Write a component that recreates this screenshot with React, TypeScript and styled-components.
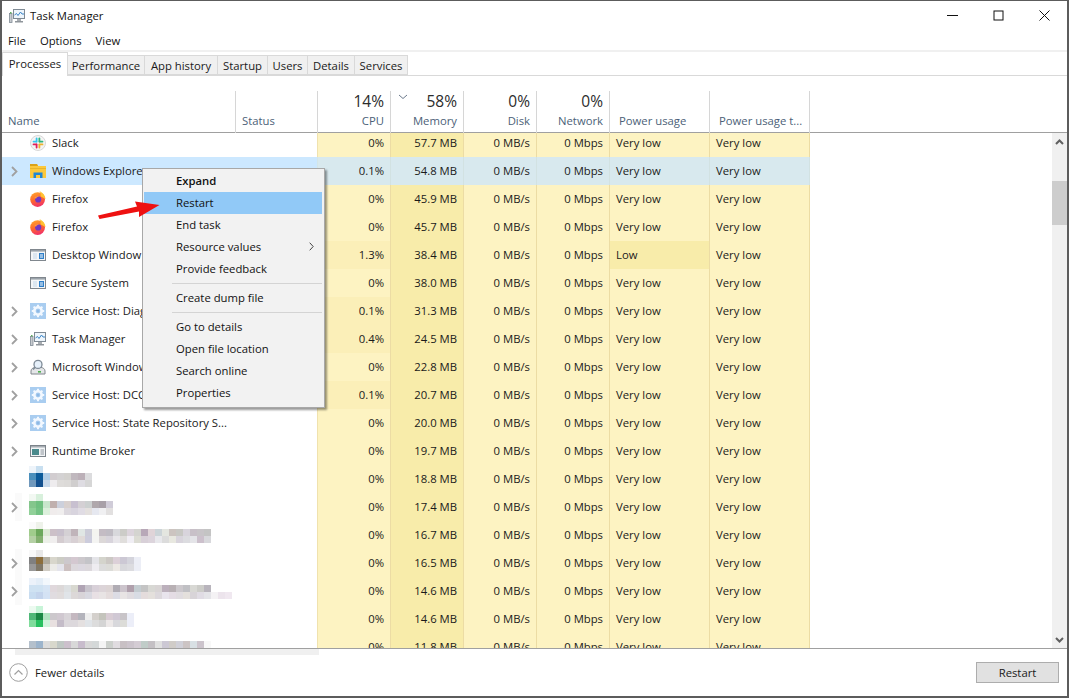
import React from "react";
import styled, { createGlobalStyle } from "styled-components";

const GlobalStyle = createGlobalStyle`
  html, body { margin: 0; padding: 0; background: #fff; }
  body { font-family: "Open Sans", "Liberation Sans", sans-serif; font-size: 11.3px; color: #1a1a1a; }
`;

const GRID = "234px 82px 73px 73px 73px 73px 100px 100px 1fr";

const Window = styled.div`
  position: relative;
  box-sizing: border-box;
  width: 1069px;
  height: 698px;
  display: flex;
  flex-direction: column;
  background: #fff;
  border-style: solid;
  border-color: #5c5c5c;
  border-width: 1px 2px 2px 2px;
  overflow: hidden;
`;
const TitleBar = styled.div`
  height: 29px;
  flex: none;
  display: flex;
  align-items: center;
  padding: 0 17px 0 7px;
  gap: 5px;
`;
const TitleText = styled.span`
  color: #111;
  flex: 1;
`;
const WinControls = styled.div`
  display: flex;
  align-items: center;
  gap: 35px;
`;
const MenuBar = styled.div`
  height: 20px;
  flex: none;
  display: flex;
  align-items: center;
  padding-left: 6px;
  gap: 14px;
  border-bottom: 2px solid #f0f0f0;
  box-sizing: content-box;
`;
const MenuLabel = styled.span`
  color: #111;
`;
const TabStrip = styled.div`
  height: 24px;
  flex: none;
  display: flex;
  align-items: flex-end;
  border-bottom: 1px solid #d9d9d9;
  box-sizing: border-box;
`;
const Tab = styled.div<{ $active?: boolean; $w: number }>`
  box-sizing: border-box;
  width: ${(p) => p.$w}px;
  height: ${(p) => (p.$active ? 24 : 20)}px;
  margin-bottom: ${(p) => (p.$active ? -1 : 0)}px;
  padding-bottom: ${(p) => (p.$active ? 3 : 0)}px;
  display: flex;
  align-items: center;
  justify-content: center;
  white-space: nowrap;
  background: ${(p) => (p.$active ? "#fff" : "#f0f0f0")};
  border: 1px solid #d9d9d9;
  border-bottom: ${(p) => (p.$active ? "none" : "1px solid #d9d9d9")};
  border-left: ${(p) => (p.$active ? "1px solid #d9d9d9" : "none")};
`;
const ColumnHeader = styled.div`
  height: 57px;
  flex: none;
  box-sizing: border-box;
  padding-top: 15px;
  display: grid;
  grid-template-columns: ${GRID};
  border-bottom: 1px solid #a0a0a0;
`;
const HeadCell = styled.div<{ $left?: boolean; $indent?: number }>`
  position: relative;
  box-sizing: border-box;
  display: flex;
  flex-direction: column;
  justify-content: flex-end;
  align-items: ${(p) => (p.$left ? "flex-start" : "flex-end")};
  padding: ${(p) => (p.$left ? `0 0 4px ${p.$indent ?? 6}px` : "0 6px 4px 0")};
  border-right: 1px solid #d6d6d6;
  &:last-child { border-right: none; }
`;
const HeadPercent = styled.span`
  font-size: 15.5px;
  line-height: 20px;
  margin-bottom: 2px;
  color: #2c2c2c;
`;
const HeadLabel = styled.span`
  color: #4c5f78;
  line-height: 16px;
  white-space: nowrap;
`;
const SortMark = styled.svg`
  position: absolute;
  left: 7px;
  top: 3px;
  width: 10px;
  height: 6px;
`;
const Body = styled.div`
  flex: 1;
  min-height: 0;
  display: flex;
`;
const Table = styled.div`
  flex: 1;
  min-width: 0;
  overflow: hidden;
`;
const RowList = styled.div`
  margin-top: -4px;
`;
const Row = styled.div`
  height: 28px;
  display: grid;
  grid-template-columns: ${GRID};
`;
const NameCell = styled.div<{ $hot?: boolean }>`
  display: flex;
  align-items: center;
  padding-left: 9px;
  white-space: nowrap;
  overflow: hidden;
  background: ${(p) => (p.$hot ? "#cce8ff" : "#fff")};
`;
const ChevronSlot = styled.div<{ $smudge?: boolean }>`
  width: 19px;
  flex: none;
  height: 100%;
  display: flex;
  align-items: center;
  background: ${(p) =>
    p.$smudge ? "linear-gradient(to right, transparent 4px, #fafafa 4px, #fafafa 11px, transparent 11px)" : "none"};
`;
const IconSvg = styled.svg`
  width: 16px;
  height: 16px;
  flex: none;
`;
const NameText = styled.span`
  margin-left: 6px;
  padding-bottom: 2px;
`;
const MosaicSvg = styled.svg`
  align-self: flex-start;
  margin: 1px 0 0 -1px;
  flex: none;
`;
const StatusCell = styled.div<{ $hot?: boolean }>`
  box-sizing: border-box;
  background: ${(p) => (p.$hot ? "#cce8ff" : "#fff")};
  border-right: 1px solid ${(p) => (p.$hot ? "#d4e6e8" : "#f0e2ae")};
`;
const DataCell = styled.div<{ $tone: "light" | "mid" | "dark" | "hot"; $text?: boolean }>`
  box-sizing: border-box;
  display: flex;
  align-items: center;
  justify-content: ${(p) => (p.$text ? "flex-start" : "flex-end")};
  padding: ${(p) => (p.$text ? "0 0 2px 6px" : "0 6px 2px 0")};
  white-space: nowrap;
  background: ${(p) =>
    p.$tone === "hot" ? "#d8e9ee" : p.$tone === "dark" ? "#f8ecaa" : p.$tone === "mid" ? "#fbefb8" : "#fdf3c2"};
  border-right: 1px solid ${(p) => (p.$tone === "hot" ? "#d2e2e2" : "#ecdca4")};
`;
const Scrollbar = styled.div`
  width: 15px;
  flex: none;
  display: flex;
  flex-direction: column;
  background: #f0f0f0;
`;
const ScrollButton = styled.div`
  height: 17px;
  flex: none;
  display: flex;
  align-items: center;
  justify-content: center;
`;
const ScrollTrack = styled.div`
  flex: 1;
`;
const ScrollThumb = styled.div`
  margin-top: 31px;
  height: 44px;
  background: #cdcdcd;
`;
const Footer = styled.div`
  position: relative;
  height: 48px;
  flex: none;
  box-sizing: border-box;
  border-top: 1px solid #a0a0a0;
  display: flex;
  align-items: center;
  padding: 0 8px 0 7px;
  gap: 7px;
`;
const FooterSmear = styled.div`
  position: absolute;
  left: 13px;
  top: 0;
  width: 304px;
  height: 6px;
  background: #f0f0f0;
`;
const CircleIcon = styled.svg`
  width: 19px;
  height: 19px;
  flex: none;
`;
const FooterLabel = styled.span`
  flex: 1;
`;
const FooterButton = styled.div`
  box-sizing: border-box;
  width: 83px;
  height: 21px;
  display: flex;
  align-items: center;
  justify-content: center;
  background: #e1e1e1;
  border: 1px solid #adadad;
`;
const Menu = styled.div`
  position: absolute;
  left: 140px;
  top: 167px;
  width: 183px;
  box-sizing: border-box;
  padding: 1px 2px 3px 1px;
  background: #f2f2f2;
  border: 1px solid #a8a8a8;
  box-shadow: 2px 2px 2px rgba(0, 0, 0, 0.4);
  display: flex;
  flex-direction: column;
`;
const MenuItem = styled.div<{ $active?: boolean; $bold?: boolean }>`
  box-sizing: border-box;
  height: 22px;
  flex: none;
  display: flex;
  align-items: center;
  justify-content: space-between;
  padding: 0 8px 2px 32px;
  background: ${(p) => (p.$active ? "#91c9f7" : "transparent")};
  font-weight: ${(p) => (p.$bold ? 600 : 400)};
  color: #111;
`;
const MenuRule = styled.div`
  height: 1px;
  margin: 3px 0 3px 28px;
  background: #d4d4d4;
`;
const Arrow = styled.svg`
  position: absolute;
  left: 94px;
  top: 196px;
  width: 66px;
  height: 24px;
`;

const Chevron = () => (
  <svg width="7" height="11" viewBox="0 0 7 11">
    <path d="M1 1l4.5 4.5L1 10" fill="none" stroke="#a0a0a0" strokeWidth="1.8" />
  </svg>
);
const Slack = () => (
  <IconSvg viewBox="0 0 16 16">
    <circle cx="8" cy="8" r="7.5" fill="#f4f4f4" stroke="#d8d8d8" />
    <path d="M6.6 3.5v3.2" stroke="#36c5f0" strokeWidth="1.8" strokeLinecap="round" />
    <path d="M3.5 6.6h2.8" stroke="#36c5f0" strokeWidth="1.8" strokeLinecap="round" />
    <path d="M9.4 3.5v3" stroke="#2eb67d" strokeWidth="1.8" strokeLinecap="round" />
    <path d="M9.6 6.6h2.9" stroke="#2eb67d" strokeWidth="1.8" strokeLinecap="round" />
    <path d="M9.5 9.4h3" stroke="#ecb22e" strokeWidth="1.8" strokeLinecap="round" />
    <path d="M9.4 9.6v2.9" stroke="#ecb22e" strokeWidth="1.8" strokeLinecap="round" />
    <path d="M6.6 9.5v3" stroke="#e01e5a" strokeWidth="1.8" strokeLinecap="round" />
    <path d="M3.5 9.4h2.8" stroke="#e01e5a" strokeWidth="1.8" strokeLinecap="round" />
  </IconSvg>
);
const Folder = () => (
  <IconSvg viewBox="0 0 16 16">
    <path d="M0 1h7l1 2h8v12H0z" fill="#fcc83c" />
    <path d="M0 1h7l1 2H0z" fill="#d9a21b" />
    <path d="M0 5h16v1H0z" fill="#e8b52c" />
    <path d="M3.5 15V9.5h9V15h-2.5v-3H6v3z" fill="#1f86d6" />
  </IconSvg>
);
const Firefox = () => (
  <IconSvg viewBox="0 0 16 16">
    <defs>
      <linearGradient id="ffx" x1="0.2" y1="0" x2="0.5" y2="1">
        <stop offset="0" stopColor="#ffa42e" />
        <stop offset="0.5" stopColor="#ff6a2c" />
        <stop offset="1" stopColor="#f0306a" />
      </linearGradient>
    </defs>
    <circle cx="7.6" cy="8.6" r="7.4" fill="url(#ffx)" />
    <path d="M9.5 0c3.2 1.5 5.8 4.5 6 8L10.5 5.2C11 3.5 10.5 1.6 9.5 0z" fill="#ffc233" />
    <circle cx="8.2" cy="8.4" r="3.1" fill="#7038c4" />
    <path d="M4.2 7.2c1-2 3.8-2.8 5.8-1.6-2 0-3.4.6-3.8 2z" fill="#ff9a3c" />
  </IconSvg>
);
const DesktopWin = () => (
  <IconSvg viewBox="0 0 16 16">
    <rect x="0.5" y="2.5" width="15" height="11" fill="#f4f6f8" stroke="#80878e" />
    <rect x="1" y="3" width="14" height="1.6" fill="#9aa2aa" />
    <rect x="9" y="6" width="5" height="6" fill="#2f7fc8" />
    <path d="M3 7h4M3 9h4M3 11h4" stroke="#c4d8ea" />
    <path d="M10 8h3M10 10h3" stroke="#fff" />
  </IconSvg>
);
const Gear = () => (
  <IconSvg viewBox="0 0 16 16">
    <rect width="16" height="16" fill="#a9cdf0" />
    <circle cx="8" cy="8" r="3.7" fill="none" stroke="#f2f8ff" strokeWidth="2.6" />
    <path d="M8 1.8v2.4M8 11.8v2.4M1.8 8h2.4M11.8 8h2.4M3.6 3.6l1.7 1.7M10.7 10.7l1.7 1.7M12.4 3.6l-1.7 1.7M5.3 10.7l-1.7 1.7" stroke="#f2f8ff" strokeWidth="2" />
    <circle cx="8" cy="8" r="1.5" fill="#8db8e4" />
  </IconSvg>
);
const TaskMgr = () => (
  <IconSvg viewBox="0 0 16 16">
    <rect x="4.5" y="1.5" width="11" height="9" fill="#eef5fb" stroke="#7f8a94" />
    <path d="M5.5 7l2-1.5 1.5 2L11.5 4l1.5 2H15" fill="none" stroke="#3c86c8" />
    <rect x="8" y="11" width="4" height="2" fill="#a8adb2" />
    <rect x="6" y="13" width="8" height="1.5" fill="#8f959b" />
    <rect x="0.5" y="5.5" width="2.5" height="9" fill="#c8ccd0" stroke="#7f8a94" strokeWidth="0.8" />
    <rect x="1" y="4" width="1.5" height="1.5" fill="#5fb05f" />
  </IconSvg>
);
const SearchUser = () => (
  <IconSvg viewBox="0 0 16 16">
    <path d="M1 15v-3c0-2 2-3.4 4-3.6h6c2 .2 4 1.6 4 3.6v3z" fill="#e4e6e8" stroke="#80868c" />
    <rect x="8" y="12" width="3" height="1.6" fill="#4fb04f" />
    <circle cx="8" cy="5.4" r="4" fill="#e6f0fa" stroke="#7e8a96" strokeWidth="1.3" />
    <path d="M5 8.5L3 10.5" stroke="#7e8a96" strokeWidth="1.6" />
  </IconSvg>
);
const Broker = () => (
  <IconSvg viewBox="0 0 16 16">
    <rect x="0.5" y="2.5" width="15" height="11" fill="#f2f4f6" stroke="#7c838a" />
    <rect x="1" y="3" width="14" height="1.5" fill="#a6acb2" />
    <rect x="2" y="6" width="7" height="6" fill="#4a8a8c" />
    <path d="M10.5 7h3.5M10.5 9h3.5M10.5 11h3.5" stroke="#8e969e" />
  </IconSvg>
);

const MOSAICS: Record<string, string[][]> = {
  m1: [
    ["#eef4fa", "#c8dff0"],
    ["#4a8fbc", "#0a5a9a", "#b0cde6", "#d2cdd0", "#d4d2d3", "#d3d1ce", "#c0b8be", "#bcb0b8", "#dcdcde"],
    ["#7098bc", "#14508e", "#c8d8ea", "#eeecee", "#dedcda", "#dcdad8", "#d0cece", "#dedce2", "#d6d6d6"],
  ],
  m2: [
    ["#f2f8f2", "#d8f0dc"],
    ["#84c68c", "#70c080", "#c8e6cc", "#c0b0ae", "#ccd0dc", "#d8d0ce", "#c8c0d0", "#d4d0d4", "#ccd0d0", "#b0a8ac", "#a8a0a8", "#d0ccd8"],
    ["#90d098", "#74c284", "#dcf0dc", "#f0ecec", "#f0eeee", "#dcd8de", "#d8d4de", "#e0dce4", "#e4e0de", "#e6e8f0", "#f0f0f2", "#e2e0e0"],
  ],
  m3: [
    ["#fafafa", "#eef2ea"],
    ["#a0cc8c", "#6ca85c", "#dce8d4", "#ccc0c8", "#c8c0cc", "#d4d0d4", "#c0b4ba", "#e0e6e4", "#ccccd8", "#f4f4f0", "#c4bcc4", "#c0bcc4", "#d8d8dc", "#ccccc8", "#dcd4dc", "#d4d4d0", "#b8a8b8", "#e0d4d8", "#ccd4d8", "#e4e6e0", "#ccc4c0", "#c8c8c4", "#d8d4dc", "#c8c0c8", "#c8c4c8", "#c4c4c4"],
    ["#b4d0a4", "#84b070", "#ecf0e8", "#f0eeee", "#d4ccd0", "#dcd8dc", "#d8d0d4", "#e0dad8", "#ccccdc", "#f4f4f2", "#dcd8d8", "#d8d4dc", "#e8e6ea", "#e0dedc", "#f0eef4", "#dcdcd4", "#d8d0d8", "#dcd4dc", "#e8e8ec", "#dcdcdc", "#e8e8e0", "#d8d4dc", "#dcdce0", "#e4e4e8", "#ccc0cc", "#d8d8dc"],
  ],
  m4: [
    ["#f8f8f8", "#e8e8e8"],
    ["#808080", "#8c6e3c", "#b0aca0", "#d8d6cc", "#ccccc4", "#ccc8cc", "#d4c8d0", "#ccc8cc", "#c4c4c8", "#e4e4e8", "#d4d4cc", "#ccc8c4", "#dcd0d8", "#ccc8d4", "#d4d4dc", "#eceef6"],
    ["#989898", "#807868", "#d0ccc4", "#ecebe8", "#e4e4ec", "#ccc0c0", "#dcd8dc", "#dcd8e0", "#dcd8dc", "#eeecf0", "#dcdcdc", "#dcdcd8", "#ece8e4", "#d8d8dc", "#dcdce0", "#eceef6"],
  ],
  m5: [
    ["#ecf2fa", "#e4eef8", "#f2f7fc"],
    ["#cfe2f2", "#cfe2f2", "#d6e4f4", "#e0d8dc", "#dcd8d8", "#dde0e2", "#d8d8d0", "#b0a4b4", "#c8c4cc", "#d8d0d8", "#dcd4d8", "#dcd4d4", "#b0acb4", "#ccc4cc", "#b0a0ac", "#c4ccd0", "#c4c4c4", "#d8d8d4", "#d8d4d4", "#bcb0bc", "#b8b0b4", "#ccc8cc", "#c0c0c4", "#d8d8d4", "#ccccc8", "#b8b4bc"],
    ["#c8dcf0", "#c4d4ec", "#d4e2f4", "#e0dce0", "#e0dcdc", "#e0e4e8", "#dcd8d8", "#d8d4d8", "#d8d8e0", "#e8e0e4", "#e8e4e4", "#e4dcdc", "#dcdce4", "#e8e4e4", "#e0dce0", "#d8dce4", "#e4dcdc", "#e4e0dc", "#dcd8dc", "#e8e4ec", "#e4dce4", "#e0dce0", "#e4e0dc", "#d8d4d8", "#e0dce4", "#e4e4e8", "#f4f2f4", "#ece4ec", "#f0e8f0"],
  ],
  m6: [
    ["#ecfaf0", "#c8f4d8"],
    ["#50b878", "#1a8844", "#b0e4c0", "#ccc8cc", "#d0c8d0", "#d8d4d8", "#c4b8c0", "#b4b4bc", "#eeeeee", "#d4d0cc", "#c4c4bc", "#d8ccd4", "#d0c8d4", "#c8c4c8", "#eceef8"],
    ["#80dc9c", "#28c060", "#d0f4dc", "#e8e0e0", "#c4bcc8", "#dcd8dc", "#dcd8dc", "#e4e0e0", "#e0e4e8", "#dcdcdc", "#d4d4d4", "#ece8e8", "#d8d8dc", "#dcdcd8", "#eceef8"],
  ],
  m7: [
    [],
    ["#b4c0cc", "#9cb4cc", "#dcdcdc", "#d8d8cc", "#c0c8c4", "#ccc0cc", "#d8d8d8", "#c8bccc", "#d8d8d8", "#d4d8d8", "#f4f4f4", "#ccd0cc", "#e0dce0", "#c8c0c4", "#ccc4cc", "#d4ccd4", "#c0ccc8", "#c4c0c4", "#e0e0e0", "#ccc8d4", "#d0ccc8", "#d0d0d8", "#ccc4c4", "#d8e0e4", "#ccc4cc", "#f8f8f8"],
    [],
  ],
};

const Mosaic = ({ rows }: { rows: string[][] }) => {
  const cols = Math.max(...rows.map((r) => r.length));
  return (
    <MosaicSvg width={cols * 7} height={21} viewBox={`0 0 ${cols * 7} 21`} shapeRendering="crispEdges">
      {rows.map((r, y) => r.map((c, x) => <rect key={`${x}-${y}`} x={x * 7} y={y * 7} width={7} height={7} fill={c} />))}
    </MosaicSvg>
  );
};

type P = {
  name?: string;
  icon?: React.ReactNode;
  mosaic?: string;
  expand?: boolean;
  cpu: string;
  mem: string;
};
const ROWS: P[] = [
  { name: "Slack", icon: <Slack />, cpu: "0%", mem: "57.7 MB" },
  { name: "Windows Explorer", icon: <Folder />, expand: true, cpu: "0.1%", mem: "54.8 MB" },
  { name: "Firefox", icon: <Firefox />, cpu: "0%", mem: "45.9 MB" },
  { name: "Firefox", icon: <Firefox />, cpu: "0%", mem: "45.7 MB" },
  { name: "Desktop Window Manager", icon: <DesktopWin />, cpu: "1.3%", mem: "38.4 MB" },
  { name: "Secure System", icon: <DesktopWin />, cpu: "0%", mem: "38.0 MB" },
  { name: "Service Host: Diagnostic Policy", icon: <Gear />, expand: true, cpu: "0.1%", mem: "31.3 MB" },
  { name: "Task Manager", icon: <TaskMgr />, expand: true, cpu: "0.4%", mem: "24.5 MB" },
  { name: "Microsoft Windows Search", icon: <SearchUser />, expand: true, cpu: "0%", mem: "22.8 MB" },
  { name: "Service Host: DCOM Server", icon: <Gear />, expand: true, cpu: "0.1%", mem: "20.7 MB" },
  { name: "Service Host: State Repository S...", icon: <Gear />, expand: true, cpu: "0%", mem: "20.0 MB" },
  { name: "Runtime Broker", icon: <Broker />, expand: true, cpu: "0%", mem: "19.7 MB" },
  { mosaic: "m1", cpu: "0%", mem: "18.8 MB" },
  { mosaic: "m2", expand: true, cpu: "0%", mem: "17.4 MB" },
  { mosaic: "m3", cpu: "0%", mem: "16.7 MB" },
  { mosaic: "m4", expand: true, cpu: "0%", mem: "16.5 MB" },
  { mosaic: "m5", expand: true, cpu: "0%", mem: "14.6 MB" },
  { mosaic: "m6", cpu: "0%", mem: "14.6 MB" },
  { mosaic: "m7", cpu: "0%", mem: "11.8 MB" },
];

const TABS: [string, number][] = [
  ["Processes", 66],
  ["Performance", 77],
  ["App history", 73],
  ["Startup", 50],
  ["Users", 40],
  ["Details", 47],
  ["Services", 53],
];

const ProcessRow = ({ row, hot }: { row: P; hot: boolean }) => {
  const base = hot ? "hot" : "light";
  const low = row.cpu === "1.3%";
  return (
    <Row>
      <NameCell $hot={hot}>
        <ChevronSlot $smudge={!!row.mosaic && row.expand}>{row.expand && <Chevron />}</ChevronSlot>
        {row.mosaic ? <Mosaic rows={MOSAICS[row.mosaic]} /> : row.icon}
        {row.name && <NameText>{row.name}</NameText>}
      </NameCell>
      <StatusCell $hot={hot} />
      <DataCell $tone={hot ? "hot" : row.cpu === "0%" ? "light" : "mid"}>{row.cpu}</DataCell>
      <DataCell $tone={hot ? "hot" : "dark"}>{row.mem}</DataCell>
      <DataCell $tone={base}>0 MB/s</DataCell>
      <DataCell $tone={base}>0 Mbps</DataCell>
      <DataCell $tone={low ? "dark" : base} $text>{low ? "Low" : "Very low"}</DataCell>
      <DataCell $tone={base} $text>Very low</DataCell>
    </Row>
  );
};

export default function App() {
  return (
    <>
      <GlobalStyle />
      <Window>
        <TitleBar>
          <TaskMgr />
          <TitleText>Task Manager</TitleText>
          <WinControls>
            <svg width="11" height="11" viewBox="0 0 11 11"><path d="M0 5.5h11" stroke="#111" /></svg>
            <svg width="11" height="11" viewBox="0 0 11 11"><rect x="1" y="1" width="9" height="9" fill="none" stroke="#111" /></svg>
            <svg width="11" height="11" viewBox="0 0 11 11"><path d="M.5.5l10 10M10.5.5l-10 10" stroke="#111" /></svg>
          </WinControls>
        </TitleBar>
        <MenuBar>
          <MenuLabel>File</MenuLabel>
          <MenuLabel>Options</MenuLabel>
          <MenuLabel>View</MenuLabel>
        </MenuBar>
        <TabStrip>
          {TABS.map(([t, w], i) => (
            <Tab key={t} $w={w} $active={i === 0}>{t}</Tab>
          ))}
        </TabStrip>
        <ColumnHeader>
          <HeadCell $left><HeadLabel>Name</HeadLabel></HeadCell>
          <HeadCell $left><HeadLabel>Status</HeadLabel></HeadCell>
          <HeadCell><HeadPercent>14%</HeadPercent><HeadLabel>CPU</HeadLabel></HeadCell>
          <HeadCell>
            <SortMark viewBox="0 0 10 6"><path d="M1 1l4 3.5L9 1" fill="none" stroke="#6c7a8c" /></SortMark>
            <HeadPercent>58%</HeadPercent><HeadLabel>Memory</HeadLabel>
          </HeadCell>
          <HeadCell><HeadPercent>0%</HeadPercent><HeadLabel>Disk</HeadLabel></HeadCell>
          <HeadCell><HeadPercent>0%</HeadPercent><HeadLabel>Network</HeadLabel></HeadCell>
          <HeadCell $left $indent={9}><HeadLabel>Power usage</HeadLabel></HeadCell>
          <HeadCell $left $indent={9}><HeadLabel>Power usage t...</HeadLabel></HeadCell>
          <HeadCell />
        </ColumnHeader>
        <Body>
          <Table>
            <RowList>
              {ROWS.map((r, i) => (
                <ProcessRow key={i} row={r} hot={i === 1} />
              ))}
            </RowList>
          </Table>
          <Scrollbar>
            <ScrollButton>
              <svg width="9" height="6" viewBox="0 0 9 6"><path d="M1 5l3.5-3.5L8 5" fill="none" stroke="#606060" strokeWidth="2" /></svg>
            </ScrollButton>
            <ScrollTrack><ScrollThumb /></ScrollTrack>
            <ScrollButton>
              <svg width="9" height="6" viewBox="0 0 9 6"><path d="M1 1l3.5 3.5L8 1" fill="none" stroke="#606060" strokeWidth="2" /></svg>
            </ScrollButton>
          </Scrollbar>
        </Body>
        <Footer>
          <FooterSmear />
          <CircleIcon viewBox="0 0 19 19">
            <circle cx="9.5" cy="9.5" r="8.8" fill="#fff" stroke="#a0a0a0" />
            <path d="M5.5 11.5l4-4 4 4" fill="none" stroke="#a0a0a0" strokeWidth="1.2" />
          </CircleIcon>
          <FooterLabel>Fewer details</FooterLabel>
          <FooterButton>Restart</FooterButton>
        </Footer>
        <Menu>
          <MenuItem $bold>Expand</MenuItem>
          <MenuItem $active>Restart</MenuItem>
          <MenuItem>End task</MenuItem>
          <MenuItem>
            Resource values
            <svg width="5" height="9" viewBox="0 0 5 9"><path d="M.7.7l3.5 3.8L.7 8.3" fill="none" stroke="#444" /></svg>
          </MenuItem>
          <MenuItem>Provide feedback</MenuItem>
          <MenuRule />
          <MenuItem>Create dump file</MenuItem>
          <MenuRule />
          <MenuItem>Go to details</MenuItem>
          <MenuItem>Open file location</MenuItem>
          <MenuItem>Search online</MenuItem>
          <MenuItem>Properties</MenuItem>
        </Menu>
        <Arrow viewBox="0 0 66 24">
          <path d="M2 18.5L3.5 22 43 14.5 43 20 63.5 8 39 4.5 41 9.5z" fill="#ee1111" />
        </Arrow>
      </Window>
    </>
  );
}
